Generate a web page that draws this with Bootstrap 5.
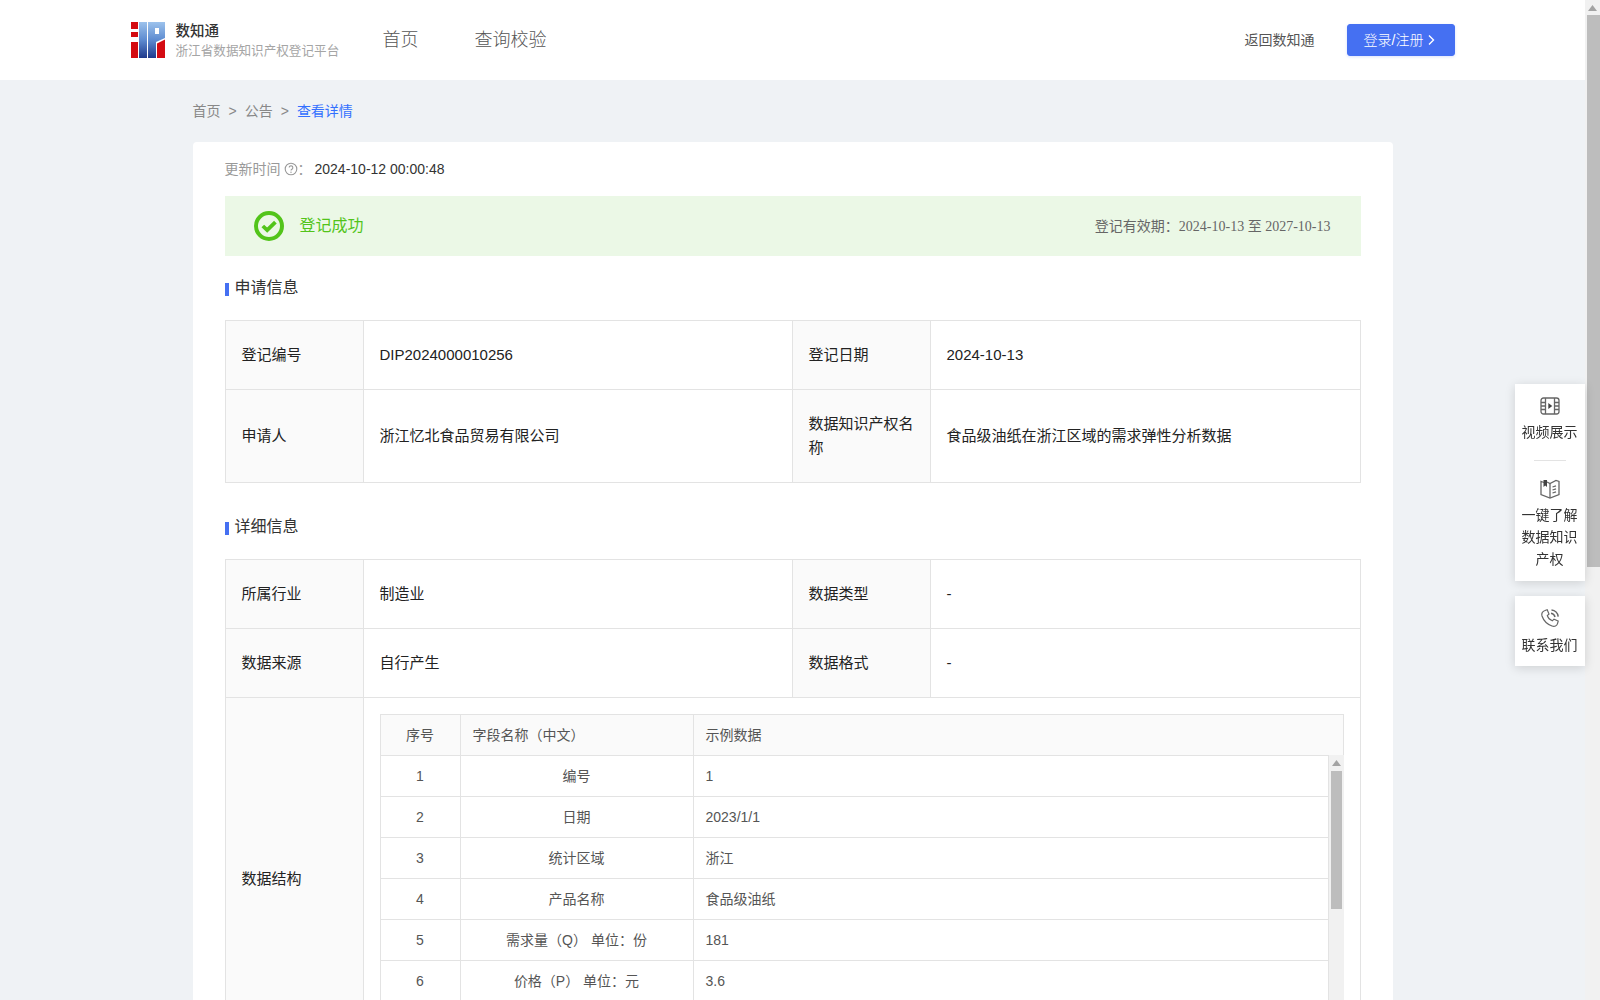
<!DOCTYPE html>
<html lang="zh-CN">
<head>
    <meta charset="UTF-8">
    <meta name="viewport" content="width=device-width, initial-scale=1.0">
    <title>查看详情</title>
    <link href="https://cdn.jsdelivr.net/npm/bootstrap@5.3.0/dist/css/bootstrap.min.css" rel="stylesheet">
    <style>
        html, body { height: 100%; overflow: hidden; }
        body { font-family: "Liberation Sans", "Noto Sans CJK SC", sans-serif; background: #eff2f5; color: #333; font-size: 14px; }
        .page-pane { width: 1585px; height: 1000px; overflow: hidden; }
        .top-bar { height: 80px; background: #fff; }
        .top-inner { width: 1324px; }
        .brand-logo { margin-right: 10px; }
        .brand-box { width: 207px; }
        .brand-name { font-size: 14.5px; line-height: 20px; font-weight: 500; color: #333; }
        .brand-sub { font-size: 12.6px; line-height: 18px; margin-top: 1px; color: #a5a5a5; white-space: nowrap; }
        .main-nav { gap: 56px; }
        .main-link { font-size: 18px; font-weight: 300; color: #555; text-decoration: none; }
        .back-link { color: #555; text-decoration: none; font-size: 14px; margin-left: 1px; }
        .right-box { gap: 32px; }
        .login-btn { width: 108px; height: 32px; padding: 0 2px 0 0; background: #4570f2; border-color: #4570f2; border-radius: 3px; font-size: 14px; font-weight: 300; box-shadow: 0 1px 3px rgba(69,112,242,.2); }
        .crumb-wrap { height: 62px; width: 1200px; }
        .crumb-wrap .breadcrumb { --bs-breadcrumb-divider: ">"; --bs-breadcrumb-divider-color: #888; --bs-breadcrumb-item-active-color: #3370ff; margin: 0; font-size: 14px; line-height: 20px; }
        .crumb-wrap a { color: #888; text-decoration: none; }
        .sheet { width: 1200px; background: #fff; border-radius: 4px 4px 0 0; padding: 15px 32px 0; }
        .update-line { line-height: 24px; margin-bottom: 15px; }
        .update-label { color: #999; }
        .help-icon { margin-left: 3px; }
        .update-colon { margin-right: 3px; }
        .status-band { height: 60px; background: #ebf8e6; padding: 0 30px 0 29px; }
        .status-text { color: #52c41a; font-size: 16px; }
        .status-date { color: #666; font-size: 14px; font-family: "Liberation Serif", "Noto Sans CJK SC", serif; }
        .status-label { font-family: "Liberation Sans", "Noto Sans CJK SC", sans-serif; }
        .sec-title { font-size: 16px; line-height: 24px; color: #333; margin: 20px 0 20px; }
        .sec-title.second { margin: 32px 0 20px; }
        .sec-title::before { content: ""; width: 4px; height: 13px; margin-right: 6px; margin-top: 2px; background: #4570f2; display: inline-block; }
        .info-table { --bs-border-color: #e3e3e3; table-layout: fixed; width: 1136px; font-size: 15px; color: #222; margin: 0; }
        .info-table > tbody > tr > td { padding: 22px 16px; line-height: 24px; vertical-align: middle; color: #222; }
        .info-table > tbody > tr > td.cell-key { background: #fafafa; width: 138px; }
        .info-table > tbody > tr > td.cell-nest { padding: 16px 16px 58px; }
        .nest-table { --bs-border-color: #e3e3e3; table-layout: fixed; font-size: 14px; margin: 0; width: 100%; }
        .nest-table th, .nest-table td { padding: 8px 12px !important; line-height: 24px; font-weight: 400; color: #555 !important; }
        .nest-table th { background: #fafafa !important; }
        .nest-body { margin-top: -1px; }
        .nest-body-table { width: 949px; flex: none; }
        .col-no { width: 80px; }
        .col-name { width: 233px; }
        .inner-rail { width: 15px; background: #f1f1f1; padding: 0 2px; }
        .rail-up { height: 16px; }
        .inner-thumb { height: 138px; background: #bdbdbd; }
        .page-rail { width: 15px; height: 1000px; background: #f1f1f1; }
        .page-thumb { height: 552px; margin-left: 2px; background: #bdbdbd; }
        .side-tools { position: fixed; left: 1515px; top: 384px; width: 70px; }
        .tool-box { background: #fff; box-shadow: 0 2px 10px rgba(0,0,0,.14); text-align: center; color: #333; line-height: 22px; padding: 12px 5px 10px 4px; margin-bottom: 15px; }
        .tool-box.tall { padding-bottom: 11px; }
        .tool-icon { display: block; margin: 0 auto 5px; }
        .tool-line { width: 32px; height: 1px; background: #e3e3e3; margin: 17px auto 18px; }
        .phone-icon { margin-bottom: 6px; }
    </style>
</head>
<body>
    <div class="d-flex">
        <div class="page-pane">
            <header class="top-bar d-flex justify-content-center">
                <div class="top-inner d-flex align-items-center">
                    <svg width="35" height="36" viewBox="0 0 35 36" class="brand-logo flex-shrink-0">
                        <defs>
                            <linearGradient id="logoBlue" x1="0" y1="0" x2="0" y2="1">
                                <stop offset="0" stop-color="#9cc2ec"/>
                                <stop offset=".5" stop-color="#5d8bd0"/>
                                <stop offset="1" stop-color="#1f3a8c"/>
                            </linearGradient>
                        </defs>
                        <rect x="0" y="0" width="7" height="7" fill="#d40b12"/>
                        <rect x="0" y="10" width="7" height="5" fill="#d40b12"/>
                        <rect x="0" y="20" width="7" height="16" fill="#d40b12"/>
                        <rect x="8" y="0" width="8" height="36" fill="url(#logoBlue)"/>
                        <path d="M17 0H34V16L25 20V36H17Z" fill="url(#logoBlue)"/>
                        <rect x="24" y="6" width="4" height="6" fill="#fff"/>
                        <path d="M26 21.5L34 17.5V36H26Z" fill="#d40b12"/>
                    </svg>
                    <div class="brand-box">
                        <div class="brand-name">数知通</div>
                        <div class="brand-sub">浙江省数据知识产权登记平台</div>
                    </div>
                    <nav class="main-nav d-flex">
                        <a class="main-link" href="#">首页</a>
                        <a class="main-link" href="#">查询校验</a>
                    </nav>
                    <div class="right-box ms-auto d-flex align-items-center">
                        <a class="back-link" href="#">返回数知通</a>
                        <button class="btn btn-primary login-btn d-flex align-items-center justify-content-center" type="button">
                            登录/注册
                            <svg width="8" height="12" viewBox="0 0 8 12" class="ms-1"><path d="M2 1.5L6.5 6L2 10.5" fill="none" stroke="#fff" stroke-width="1.4"/></svg>
                        </button>
                    </div>
                </div>
            </header>

            <div class="crumb-wrap mx-auto d-flex align-items-center">
                <ol class="breadcrumb">
                    <li class="breadcrumb-item"><a href="#">首页</a></li>
                    <li class="breadcrumb-item"><a href="#">公告</a></li>
                    <li class="breadcrumb-item active">查看详情</li>
                </ol>
            </div>

            <main class="sheet mx-auto">
                <div class="update-line d-flex align-items-center">
                    <span class="update-label">更新时间</span>
                    <svg width="14" height="14" viewBox="0 0 14 14" class="help-icon"><circle cx="7" cy="7" r="5.8" fill="none" stroke="#999" stroke-width="1.1"/><path d="M5.2 5.6a1.8 1.8 0 1 1 2.7 1.6c-.6.4-.9.7-.9 1.4" fill="none" stroke="#999" stroke-width="1.1"/><circle cx="7" cy="10.2" r=".7" fill="#999"/></svg>
                    <span class="update-label update-colon">：</span>
                    <span>2024-10-12 00:00:48</span>
                </div>

                <div class="status-band d-flex align-items-center justify-content-between">
                    <div class="d-flex align-items-center">
                        <svg width="30" height="30" viewBox="0 0 30 30" class="me-3"><circle cx="15" cy="15" r="13" fill="none" stroke="#52c41a" stroke-width="4"/><path d="M8.8 15L13.2 19.2L21.4 11.2" fill="none" stroke="#52c41a" stroke-width="3.8"/></svg>
                        <span class="status-text">登记成功</span>
                    </div>
                    <div class="status-date"><span class="status-label">登记有效期：</span>2024-10-13 至 2027-10-13</div>
                </div>

                <div class="sec-title d-flex align-items-center">申请信息</div>
                <table class="table table-bordered info-table">
                    <colgroup><col style="width:138px"><col style="width:429px"><col style="width:138px"><col></colgroup>
                    <tbody>
                        <tr>
                            <td class="cell-key">登记编号</td>
                            <td>DIP2024000010256</td>
                            <td class="cell-key">登记日期</td>
                            <td>2024-10-13</td>
                        </tr>
                        <tr>
                            <td class="cell-key">申请人</td>
                            <td>浙江忆北食品贸易有限公司</td>
                            <td class="cell-key">数据知识产权名称</td>
                            <td>食品级油纸在浙江区域的需求弹性分析数据</td>
                        </tr>
                    </tbody>
                </table>

                <div class="sec-title second d-flex align-items-center">详细信息</div>
                <table class="table table-bordered info-table">
                    <colgroup><col style="width:138px"><col style="width:429px"><col style="width:138px"><col></colgroup>
                    <tbody>
                        <tr>
                            <td class="cell-key">所属行业</td>
                            <td>制造业</td>
                            <td class="cell-key">数据类型</td>
                            <td>-</td>
                        </tr>
                        <tr>
                            <td class="cell-key">数据来源</td>
                            <td>自行产生</td>
                            <td class="cell-key">数据格式</td>
                            <td>-</td>
                        </tr>
                        <tr>
                            <td class="cell-key">数据结构</td>
                            <td colspan="3" class="cell-nest">
                                <table class="table table-bordered nest-table">
                                    <colgroup><col class="col-no"><col class="col-name"><col></colgroup>
                                    <thead>
                                        <tr><th class="text-center">序号</th><th>字段名称（中文）</th><th>示例数据</th></tr>
                                    </thead>
                                </table>
                                <div class="nest-body d-flex">
                                    <table class="table table-bordered nest-table nest-body-table">
                                        <colgroup><col class="col-no"><col class="col-name"><col></colgroup>
                                        <tbody id="fieldRows"></tbody>
                                    </table>
                                    <div class="inner-rail flex-shrink-0">
                                        <div class="rail-up d-flex align-items-center justify-content-center">
                                            <svg width="9" height="6" viewBox="0 0 9 6"><path d="M4.5 0L9 6H0Z" fill="#a3a3a3"/></svg>
                                        </div>
                                        <div class="inner-thumb"></div>
                                    </div>
                                </div>
                            </td>
                        </tr>
                    </tbody>
                </table>
            </main>
        </div>

        <div class="page-rail flex-shrink-0">
            <div class="d-flex align-items-center justify-content-center" style="height:15px">
                <svg width="9" height="6" viewBox="0 0 9 6"><path d="M4.5 0L9 6H0Z" fill="#a3a3a3"/></svg>
            </div>
            <div class="page-thumb"></div>
        </div>
    </div>

    <aside class="side-tools">
        <div class="tool-box tall">
            <svg class="tool-icon" width="20" height="20" viewBox="0 0 20 20" fill="none" stroke="#666" stroke-width="1.3">
                <rect x="1" y="2" width="18" height="16" rx="2.5"/>
                <path d="M5.5 2V18M14.5 2V18M1 6.5H5.5M1 10H5.5M1 13.5H5.5M14.5 6.5H19M14.5 10H19M14.5 13.5H19"/>
                <path d="M8.3 7L12.3 10L8.3 13Z" fill="#444" stroke="none"/>
            </svg>
            <div>视频展示</div>
            <div class="tool-line"></div>
            <svg class="tool-icon" width="20" height="20" viewBox="0 0 20 20" fill="none" stroke="#666" stroke-width="1.3">
                <path d="M4 3.5L1 2.5V15.5L10 19L19 15.5V2.5L16 1.5L10 4.5L7 3"/>
                <path d="M10 4.5V19"/>
                <path d="M3.5 1H7V8L5.2 6.5L3.5 8Z" fill="#444" stroke="none"/>
                <path d="M12.5 8L16 6.8M12.5 11L16 9.8M12.5 14L16 12.8"/>
            </svg>
            <div>一键了解<br>数据知识<br>产权</div>
        </div>
        <div class="tool-box">
            <svg class="tool-icon phone-icon" width="20" height="20" viewBox="0 0 20 20" fill="none" stroke="#666" stroke-width="1.2">
                <path d="M5 2.5L7.2 1.8L9 6L7.3 7.7C8 10 10 12 12.3 12.8L14 11.1L18.2 13L17.6 15.4C17 18 14.5 19 12 18C7 16.2 3.6 12.6 2 8C1.2 5.5 2.5 3.2 5 2.5Z"/>
                <path d="M11 5.2C13 5.5 14.6 7 15 9M11.5 2C15 2.3 17.8 5 18.2 8.6" stroke-width="1.5"/>
            </svg>
            <div>联系我们</div>
        </div>
    </aside>

    <script>
        // 字段示例数据
        const fields = [
            [1, '编号', '1'],
            [2, '日期', '2023/1/1'],
            [3, '统计区域', '浙江'],
            [4, '产品名称', '食品级油纸'],
            [5, '需求量（Q） 单位：份', '181'],
            [6, '价格（P） 单位：元', '3.6']
        ];
        const tbody = document.getElementById('fieldRows');
        fields.forEach(f => {
            const tr = document.createElement('tr');
            f.forEach((value, i) => {
                const td = document.createElement('td');
                td.innerText = value;
                if (i < 2) td.className = 'text-center';
                tr.appendChild(td);
            });
            tbody.appendChild(tr);
        });
    </script>
    <script src="https://cdn.jsdelivr.net/npm/bootstrap@5.3.0/dist/js/bootstrap.bundle.min.js"></script>
</body>
</html>
